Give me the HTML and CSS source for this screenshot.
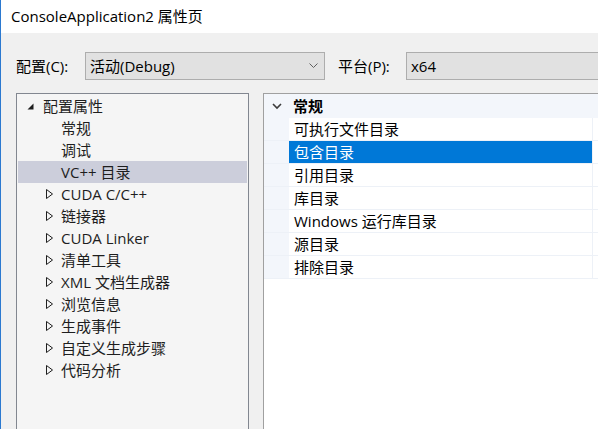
FILE: index.html
```html
<!DOCTYPE html>
<html lang="zh-CN">
<head>
<meta charset="utf-8">
<title>ConsoleApplication2 属性页</title>
<link rel="stylesheet" href="styles.css">
</head>
<body>
<div class="window">
  <div class="titlebar">ConsoleApplication2 属性页</div>
  <div class="content">
    <div class="config-row">
      <span class="label label-config">配置(C):</span>
      <div class="combo combo-config">
        <span class="combo-text">活动(Debug)</span>
        <svg class="combo-arrow" width="9" height="6" viewBox="0 0 9 6"><polyline points="0.5,0.5 4.5,4.5 8.5,0.5" fill="none" stroke="#606060" stroke-width="1"/></svg>
      </div>
      <span class="label label-platform">平台(P):</span>
      <div class="combo combo-platform">
        <span class="combo-text">x64</span>
      </div>
    </div>
    <div class="panels">
      <div class="tree">
        <div class="tree-row root">
          <svg class="tri-open" width="7" height="7" viewBox="0 0 7 7"><polygon points="6.5,0.5 6.5,6.5 0.5,6.5" fill="#1e1e1e"/></svg>
          <span>配置属性</span>
        </div>
        <div class="tree-row leaf"><span>常规</span></div>
        <div class="tree-row leaf"><span>调试</span></div>
        <div class="tree-row leaf selected"><span>VC++ 目录</span></div>
        <div class="tree-row node"><svg class="tri-closed" width="7" height="10" viewBox="0 0 7 10"><polygon points="0.5,0.5 6.5,5 0.5,9.5" fill="none" stroke="#1e1e1e" stroke-width="1"/></svg><span>CUDA C/C++</span></div>
        <div class="tree-row node"><svg class="tri-closed" width="7" height="10" viewBox="0 0 7 10"><polygon points="0.5,0.5 6.5,5 0.5,9.5" fill="none" stroke="#1e1e1e" stroke-width="1"/></svg><span>链接器</span></div>
        <div class="tree-row node"><svg class="tri-closed" width="7" height="10" viewBox="0 0 7 10"><polygon points="0.5,0.5 6.5,5 0.5,9.5" fill="none" stroke="#1e1e1e" stroke-width="1"/></svg><span>CUDA Linker</span></div>
        <div class="tree-row node"><svg class="tri-closed" width="7" height="10" viewBox="0 0 7 10"><polygon points="0.5,0.5 6.5,5 0.5,9.5" fill="none" stroke="#1e1e1e" stroke-width="1"/></svg><span>清单工具</span></div>
        <div class="tree-row node"><svg class="tri-closed" width="7" height="10" viewBox="0 0 7 10"><polygon points="0.5,0.5 6.5,5 0.5,9.5" fill="none" stroke="#1e1e1e" stroke-width="1"/></svg><span>XML 文档生成器</span></div>
        <div class="tree-row node"><svg class="tri-closed" width="7" height="10" viewBox="0 0 7 10"><polygon points="0.5,0.5 6.5,5 0.5,9.5" fill="none" stroke="#1e1e1e" stroke-width="1"/></svg><span>浏览信息</span></div>
        <div class="tree-row node"><svg class="tri-closed" width="7" height="10" viewBox="0 0 7 10"><polygon points="0.5,0.5 6.5,5 0.5,9.5" fill="none" stroke="#1e1e1e" stroke-width="1"/></svg><span>生成事件</span></div>
        <div class="tree-row node"><svg class="tri-closed" width="7" height="10" viewBox="0 0 7 10"><polygon points="0.5,0.5 6.5,5 0.5,9.5" fill="none" stroke="#1e1e1e" stroke-width="1"/></svg><span>自定义生成步骤</span></div>
        <div class="tree-row node"><svg class="tri-closed" width="7" height="10" viewBox="0 0 7 10"><polygon points="0.5,0.5 6.5,5 0.5,9.5" fill="none" stroke="#1e1e1e" stroke-width="1"/></svg><span>代码分析</span></div>
      </div>
      <div class="grid">
        <div class="grid-header">
          <div class="gutter">
            <svg width="10" height="7" viewBox="0 0 10 7"><polyline points="1,1 5,5 9,1" fill="none" stroke="#3c3c3c" stroke-width="1.6"/></svg>
          </div>
          <div class="header-text">常规</div>
        </div>
        <div class="grid-row"><div class="gutter"></div><div class="cell">可执行文件目录</div><div class="value"></div></div>
        <div class="grid-row selected"><div class="gutter"></div><div class="cell">包含目录</div><div class="value"></div></div>
        <div class="grid-row"><div class="gutter"></div><div class="cell">引用目录</div><div class="value"></div></div>
        <div class="grid-row"><div class="gutter"></div><div class="cell">库目录</div><div class="value"></div></div>
        <div class="grid-row"><div class="gutter"></div><div class="cell">Windows 运行库目录</div><div class="value"></div></div>
        <div class="grid-row"><div class="gutter"></div><div class="cell">源目录</div><div class="value"></div></div>
        <div class="grid-row"><div class="gutter"></div><div class="cell">排除目录</div><div class="value"></div></div>
      </div>
    </div>
  </div>
</div>
</body>
</html>
```

FILE: styles.css
```css
* { box-sizing: border-box; }
html, body { margin: 0; padding: 0; }
body {
  width: 598px;
  height: 429px;
  overflow: hidden;
  font-family: "Open Sans", "Noto Sans CJK SC", sans-serif;
  font-size: 15px;
  color: #1e1e1e;
  background: #f0f0f0;
}
.window {
  width: 598px;
  height: 429px;
  border-left: 1px solid #2b79d0;
  display: flex;
  flex-direction: column;
  overflow: hidden;
}
.titlebar {
  height: 33px;
  flex: none;
  background: #ffffff;
  padding-left: 10px;
  display: flex;
  align-items: center;
  line-height: 20px;
  color: #000;
  padding-bottom: 2px;
}
.content {
  flex: 1;
  background: #f0f0f0;
  padding: 19px 0 0 15px;
  display: flex;
  flex-direction: column;
  min-height: 0;
  overflow: hidden;
}
.config-row {
  display: flex;
  align-items: center;
  height: 28px;
  flex: none;
}
.label { line-height: 20px; color: #000; white-space: nowrap; flex: none; }
.label-config { width: 69px; }
.label-platform { width: 68px; margin-left: 13px; }
.combo {
  height: 28px;
  background: #e1e1e1;
  border: 1px solid #adadad;
  display: flex;
  align-items: center;
  padding-left: 4px;
  flex: none;
}
.combo-config { width: 240px; justify-content: space-between; padding-right: 6px; }
.combo-platform { width: 220px; }
.combo-text { line-height: 20px; color: #000; }
.combo-arrow { display: block; }
.panels {
  display: flex;
  gap: 14px;
  margin-top: 13px;
  flex: 1;
  min-height: 0;
}
.tree {
  width: 233px;
  flex: none;
  background: #f5f5f5;
  border: 1px solid #828790;
  border-bottom: none;
  padding: 1px;
}
.tree-row {
  height: 22px;
  display: flex;
  align-items: center;
  line-height: 20px;
  white-space: nowrap;
}
.tree-row.root { padding-left: 9px; }
.tree-row.root .tri-open { margin-right: 9px; margin-top: 1px; }
.tree-row.leaf { padding-left: 43px; }
.tree-row.node { padding-left: 28px; }
.tree-row.node .tri-closed { margin-right: 8px; }
.tree-row.selected { background: #cccedb; }
.grid {
  flex: 1;
  background: #ffffff;
  border-left: 1px solid #a0a0a0;
  border-top: 1px solid #a0a0a0;
  margin-right: -20px;
  min-width: 0;
}
.grid-header {
  height: 24px;
  display: flex;
  align-items: center;
  background: #f3f6fb;
}
.grid-header .gutter {
  width: 25px;
  display: flex;
  justify-content: center;
  align-items: center;
  padding-left: 1px;
}
.header-text {
  font-weight: bold;
  padding-left: 4px;
  line-height: 20px;
  color: #000;
}
.grid-row {
  height: 23px;
  display: flex;
  border-bottom: 1px solid #edf1f7;
}
.grid-row .gutter {
  width: 25px;
  flex: none;
  background: #f3f6fb;
}
.cell {
  width: 304px;
  flex: none;
  padding-left: 5px;
  display: flex;
  align-items: center;
  line-height: 20px;
  color: #000;
  border-right: 1px solid #edf1f7;
  white-space: nowrap;
}
.value { flex: 1; }
.grid-row.selected .cell { background: #0078d7; color: #ffffff; }
```
